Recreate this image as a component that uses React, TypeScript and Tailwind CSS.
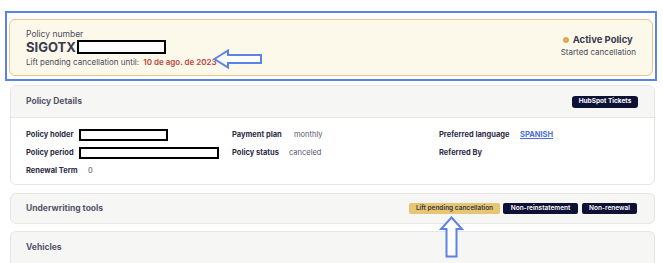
import React from "react";

const font = { fontFamily: "Inter, 'Open Sans', sans-serif" };

function Redact({ w }: { w: number }) {
  return <div className="h-[12px] border-2 border-black bg-white" style={{ width: w }} />;
}

export default function App() {
  return (
    <div className="relative w-[663px] h-[263px] overflow-hidden bg-white" style={font}>
      {/* annotation frame */}
      <div className="ml-[5px] mt-[11px] w-[652px] border-2 border-[#5b83e6] px-[2px] pt-[6px] pb-[3px]">
        <div className="flex h-[57px] items-center justify-between rounded-[6px] border border-[#ecc586] bg-[#fdf9ea] pl-[16px] pr-[16px]">
          <div className="flex flex-col">
            <div className="text-[8.5px] leading-[10px] text-[#4a4a60]">Policy number</div>
            <div className="mt-[1px] flex items-center">
              <span className="text-[13px] font-bold leading-[15px] text-[#3a3a52]">SIGOTX</span>
              <div className="ml-[1px] h-[14px] w-[89px] border-2 border-black bg-white" />
            </div>
            <div className="mt-[2px] text-[8px] leading-[10px] text-[#4a4a60]">
              Lift pending cancellation until:{" "}
              <span className="ml-[2px] font-semibold text-[#c2413a]">10 de ago. de 2023</span>
            </div>
          </div>
          <div className="flex flex-col items-start pb-[5px]">
            <div className="flex items-center pl-[2px]">
              <span className="mr-[4px] h-[6px] w-[6px] rounded-full bg-[#d8ab52]" />
              <span className="text-[9.5px] font-bold leading-[12px] text-[#3a3a52]">Active Policy</span>
            </div>
            <div className="mt-[2px] text-[8px] leading-[9px] text-[#4a4a60]">Started cancellation</div>
          </div>
        </div>
      </div>

      {/* Policy details */}
      <div className="ml-[10px] mt-[4px] w-[645px] overflow-hidden rounded-[6px] border border-[#e6e6e6]">
        <div className="flex h-[32px] items-center justify-between border-b border-[#e6e6e6] bg-[#f6f6f4] pl-[15px] pr-[16px]">
          <span className="text-[8.5px] font-bold text-[#55556a]">Policy Details</span>
          <span className="flex h-[12px] w-[66px] items-center justify-center rounded-[3px] bg-[#0e1136] text-[6.5px] font-bold text-white">
            HubSpot Tickets
          </span>
        </div>
        <div className="grid h-[66px] grid-cols-[206px_207px_1fr] content-start pl-[15px] pt-[8px] text-[7.5px] text-[#2c2c44]">
          <div className="flex h-[18px] items-center">
            <span className="w-[53px] font-bold">Policy holder</span>
            <Redact w={89} />
          </div>
          <div className="flex h-[18px] items-center">
            <span className="w-[62px] font-bold">Payment plan</span>
            <span className="text-[#55556a]">monthly</span>
          </div>
          <div className="flex h-[18px] items-center">
            <span className="w-[81px] font-bold">Preferred language</span>
            <span className="font-bold text-[#4a6fd6] underline">SPANISH</span>
          </div>
          <div className="flex h-[18px] items-center">
            <span className="w-[53px] font-bold">Policy period</span>
            <Redact w={140} />
          </div>
          <div className="flex h-[18px] items-center">
            <span className="w-[57px] font-bold">Policy status</span>
            <span className="text-[#55556a]">canceled</span>
          </div>
          <div className="flex h-[18px] items-center">
            <span className="font-bold">Referred By</span>
          </div>
          <div className="flex h-[18px] items-center">
            <span className="w-[62px] font-bold">Renewal Term</span>
            <span className="text-[#55556a]">0</span>
          </div>
        </div>
      </div>

      {/* Underwriting tools */}
      <div className="ml-[10px] mt-[8px] flex h-[31px] w-[645px] items-center justify-between rounded-[6px] border border-[#e6e6e6] bg-[#f6f6f4] pl-[15px] pr-[17px]">
        <span className="text-[8.5px] font-bold text-[#55556a]">Underwriting tools</span>
        <div className="flex items-center gap-[3px] text-[6.5px] font-semibold">
          <span className="flex h-[11px] w-[91px] items-center justify-center rounded-[2px] bg-[#e6c573] text-[#3a3a40]">
            Lift pending cancellation
          </span>
          <span className="flex h-[11px] w-[75px] items-center justify-center rounded-[2px] bg-[#0e1136] text-white">
            Non-reinstatement
          </span>
          <span className="ml-[1px] flex h-[11px] w-[55px] items-center justify-center rounded-[2px] bg-[#0e1136] text-white">
            Non-renewal
          </span>
        </div>
      </div>

      {/* Vehicles */}
      <div className="ml-[10px] mt-[7px] h-[40px] w-[645px] rounded-t-[6px] border border-b-0 border-[#e6e6e6] bg-[#f6f6f4] pl-[15px] pt-[9px] text-[8.5px] leading-[12px]">
        <span className="font-bold text-[#55556a]">Vehicles</span>
      </div>

      {/* annotation arrows */}
      <svg className="absolute left-[213px] top-[49px]" width="50" height="20" viewBox="0 0 50 20">
        <path d="M1.5 10 L15 1.5 L15 6 L48 6 L48 14 L15 14 L15 18.5 Z" fill="white" stroke="#5b83e6" strokeWidth="2" strokeLinejoin="miter" />
      </svg>
      <svg className="absolute left-[439px] top-[216px]" width="25" height="42" viewBox="0 0 25 42">
        <path d="M12.5 1.5 L23 13 L17.5 13 L17.5 40.5 L7.5 40.5 L7.5 13 L2 13 Z" fill="white" stroke="#5b83e6" strokeWidth="2" strokeLinejoin="miter" />
      </svg>
    </div>
  );
}
